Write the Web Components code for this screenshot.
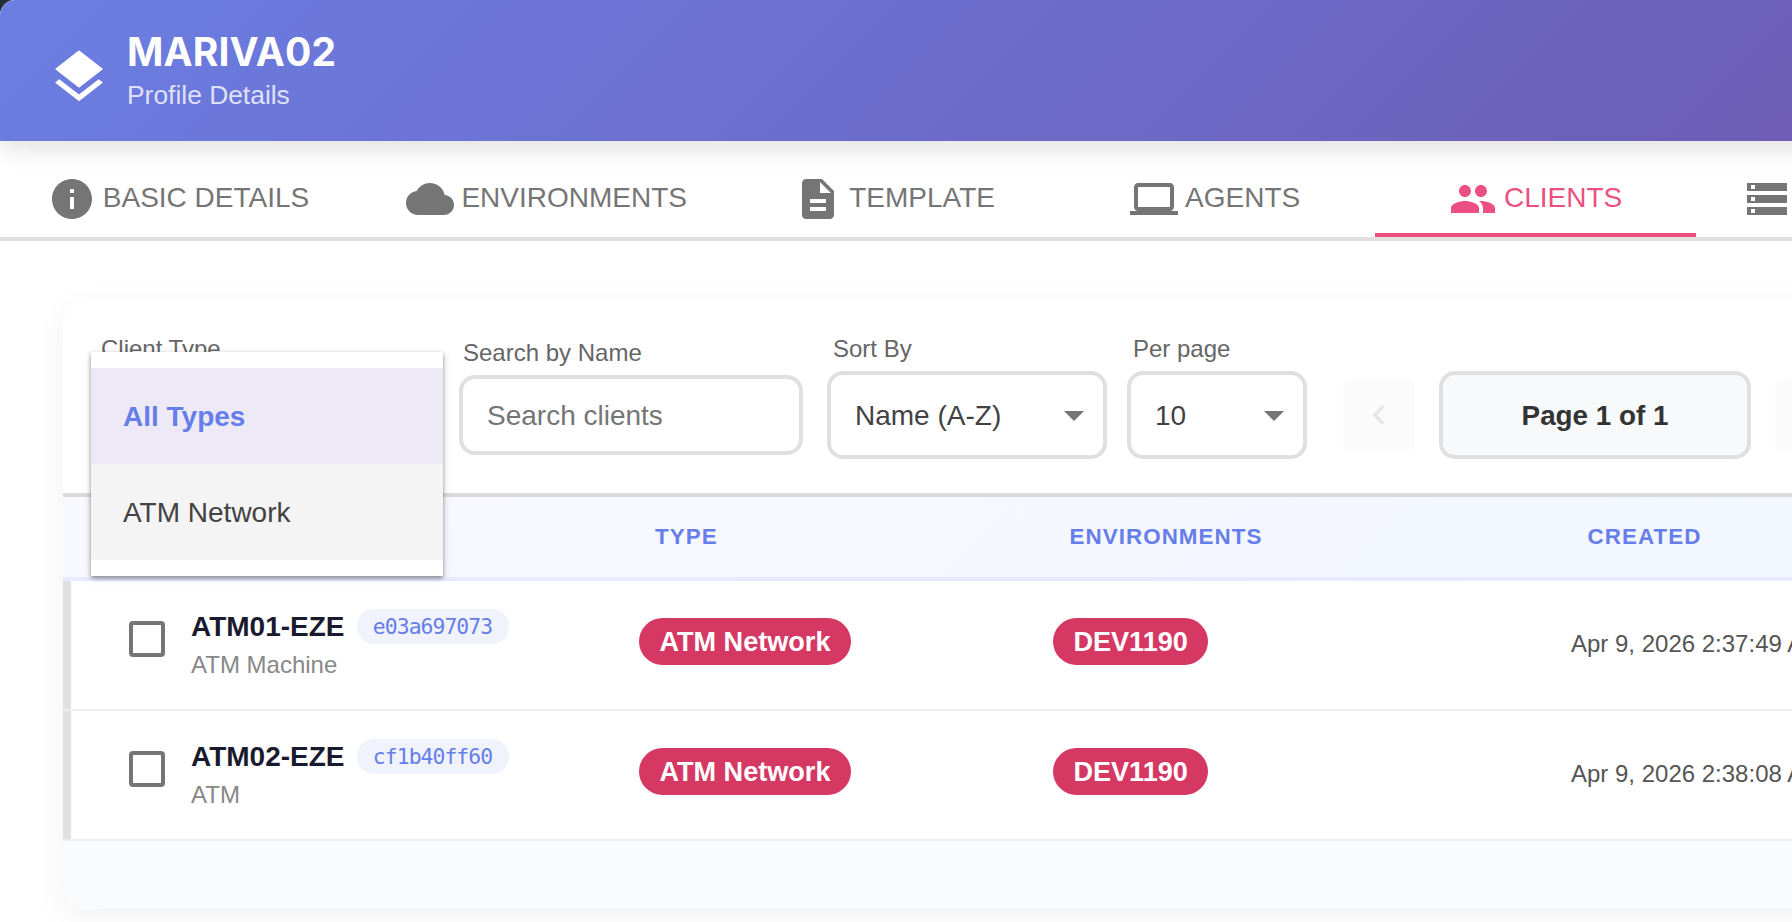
<!DOCTYPE html>
<html lang="en">
<head>
<meta charset="utf-8">
<title>MARIVA02 - Profile Details</title>
<style>
  html, body {
    margin: 0;
    height: 100%;
    overflow: hidden;
    background: #252d37;
    font-family: "Liberation Sans", Arial, sans-serif;
  }
</style>
</head>
<body>
<profile-page></profile-page>

<script>
const ICONS = {
  layers: "M11.99 18.54l-7.37-5.73L3 14.07l9 7 9-7-1.63-1.27-7.38 5.74zM12 16l7.36-5.73L21 9l-9-7-9 7 1.63 1.27L12 16z",
  info: "M12 2C6.48 2 2 6.48 2 12s4.48 10 10 10 10-4.48 10-10S17.52 2 12 2zm1 15h-2v-6h2v6zm0-8h-2V7h2v2z",
  cloud: "M19.35 10.04C18.67 6.59 15.64 4 12 4 9.11 4 6.6 5.64 5.35 8.04 2.34 8.36 0 10.91 0 14c0 3.31 2.69 6 6 6h13c2.76 0 5-2.24 5-5 0-2.64-2.05-4.78-4.65-4.96z",
  description: "M14 2H6c-1.1 0-1.99.9-1.99 2L4 20c0 1.1.89 2 1.99 2H18c1.1 0 2-.9 2-2V8l-6-6zm2 16H8v-2h8v2zm0-4H8v-2h8v2zm-3-5V3.5L18.5 9H13z",
  computer: "M20 18c1.1 0 1.99-.9 1.99-2L22 6c0-1.1-.9-2-2-2H4c-1.1 0-2 .9-2 2v10c0 1.1.9 2 2 2H0v2h24v-2h-4zM4 6h16v10H4V6z",
  people: "M16 11c1.66 0 2.99-1.34 2.99-3S17.66 5 16 5c-1.66 0-3 1.34-3 3s1.34 3 3 3zm-8 0c1.66 0 2.99-1.34 2.99-3S9.66 5 8 5C6.34 5 5 6.34 5 8s1.34 3 3 3zm0 2c-2.33 0-7 1.17-7 3.5V19h14v-2.5c0-2.33-4.67-3.5-7-3.5zm8 0c-.29 0-.62.02-.97.05 1.16.84 1.97 1.97 1.97 3.45V19h6v-2.5c0-2.33-4.67-3.5-7-3.5z",
  storage: "M2 20h20v-4H2v4zm2-3h2v2H4v-2zM2 4v4h20V4H2zm4 3H4V5h2v2zm-4 7h20v-4H2v4zm2-3h2v2H4v-2z",
  arrow: "M7 10l5 5 5-5z",
  left: "M15.41 7.41L14 6l-6 6 6 6 1.41-1.41L10.83 12z",
  right: "M8.59 16.59L10 18l6-6-6-6-1.41 1.41L13.17 12z"
};

// Base class: every element renders its css and html in an open shadow root
class BaseElement extends HTMLElement {
  constructor(){
    super();
    this.attachShadow({mode: "open"});
  }

  connectedCallback(){
    this.shadowRoot.innerHTML = `
    <style>
      * { box-sizing: border-box; }
      ${this.constructor.styles}
    </style>
    ${this.template()}`;
  }
}

class UiIcon extends BaseElement {
  static get styles(){
    return /* css */`
      :host {
        display: block;
        flex: none;
        width: var(--icon-size, 48px);
        height: var(--icon-size, 48px);
      }

      svg {
        display: block;
        width: 100%;
        height: 100%;
        fill: currentColor;
      }
    `
  }

  template(){
    return /* html */`<svg viewBox="0 0 24 24"><path d="${ICONS[this.getAttribute("name")]}"/></svg>`
  }
}

class ProfileHeader extends BaseElement {
  static get styles(){
    return /* css */`
      :host {
        display: flex;
        position: relative;
        z-index: 1;
        width: 2600px;
        height: 141px;
        padding: 32px 47px 0;
        gap: 16px;
        background: linear-gradient(135deg, #6b7ee2 0%, #6e4fa4 100%);
        border-radius: 15px 0 0 0;
        box-shadow: 0 8px 24px rgba(0, 0, 0, .12);
        color: #fff;
      }

      ui-icon {
        --icon-size: 64px;
        margin-top: 13px;
      }

      h1 {
        margin: 0;
        font: 650 39px/40px Inter, sans-serif;
        letter-spacing: .15px;
      }

      p {
        margin: 8px 0 0;
        font-size: 26.4px;
        line-height: 30px;
        color: rgba(255, 255, 255, .8);
      }
    `
  }

  template(){
    return /* html */`
    <ui-icon name="layers"></ui-icon>
    <div>
      <h1><slot></slot></h1>
      <p><slot name="subtitle"></slot></p>
    </div>`
  }
}

class NavTab extends BaseElement {
  static get styles(){
    return /* css */`
      :host {
        display: flex;
        flex: none;
        justify-content: center;
        align-items: center;
        gap: 7px;
        min-width: 320.5px;
        height: 96px;
        padding: 24px 47.4px 0;
        border-bottom: 4px solid transparent;
        font-size: 28px;
        color: #757575;
        white-space: nowrap;
      }

      :host([active]) {
        color: #ec5082;
        border-color: #ec5082;
      }

      :host(:empty) {
        justify-content: flex-start;
      }

      span {
        margin-top: -3px;
      }
    `
  }

  template(){
    return /* html */`<ui-icon name="${this.getAttribute("icon")}"></ui-icon><span><slot></slot></span>`
  }
}

class NavTabs extends BaseElement {
  static get styles(){
    return /* css */`
      :host {
        display: flex;
        height: 100px;
        border-bottom: 4px solid #e0e0e0;
        background: #fff;
      }

      ::slotted(:first-child) {
        box-sizing: border-box;
        width: 359px;
        padding-left: 46px !important;
        padding-right: 48px !important;
      }
    `
  }

  template(){
    return /* html */`<slot></slot>`
  }
}

// Labelled box: plain input, or a select when it has the "select" attribute
class FormField extends BaseElement {
  static get styles(){
    return /* css */`
      :host {
        display: flex;
        flex: none;
        flex-direction: column;
        gap: 8px;
      }

      label {
        padding-left: var(--label-indent, 6px);
        font-size: 24px;
        line-height: 28px;
        color: #666;
      }

      .box {
        display: flex;
        align-items: center;
        justify-content: space-between;
        height: 80px;
        padding: 0 5px 0 24px;
        border: 4px solid #e0e0e0;
        border-radius: 16px;
        font-size: 28px;
        color: #757575;
      }

      span {
        padding-top: 2px;
      }

      :host([select]) .box {
        height: 88px;
        color: #424242;
      }

      ui-icon {
        color: #757575;
      }
    `
  }

  template(){
    return /* html */`
    <label>${this.getAttribute("label")}</label>
    <div class="box">
      <span><slot></slot></span>
      ${this.hasAttribute("select") ? `<ui-icon name="arrow"></ui-icon>` : ""}
    </div>`
  }
}

class SelectMenu extends BaseElement {
  static get styles(){
    return /* css */`
      :host {
        display: block;
        position: absolute;
        top: 51px;
        left: 28px;
        z-index: 2;
        width: 352px;
        padding: 16px 0;
        background: #fff;
        box-shadow:
          0 2px 4px rgba(0, 0, 0, .42),
          0 2px 10px rgba(0, 0, 0, .1);
        font-size: 28px;
      }

      ::slotted(div) {
        box-sizing: border-box;
        height: 96px;
        padding: 1px 0 0 32px;
        line-height: 96px;
        color: #424242;
        background: #f4f4f4;
      }

      ::slotted(.selected) {
        color: #667eea;
        background: #ede9f6;
        font-weight: bold;
      }
    `
  }

  template(){
    return /* html */`<slot></slot>`
  }
}

class PageControls extends BaseElement {
  static get styles(){
    return /* css */`
      :host {
        display: flex;
        flex: none;
        align-items: center;
        gap: 24px;
        height: 88px;
      }

      button {
        display: grid;
        place-items: center;
        width: 72px;
        height: 72px;
        padding: 0;
        border: 0;
        border-radius: 8px;
        background: #fbfbfb;
        color: #e5e5e5;
        --icon-size: 40px;
      }

      .current {
        width: 312px;
        height: 88px;
        border: 4px solid #e0e0e0;
        border-radius: 16px;
        background: #f8f9fb;
        font-size: 27.8px;
        font-weight: bold;
        line-height: 82px;
        text-align: center;
        color: #333;
      }
    `
  }

  template(){
    return /* html */`
    <button><ui-icon name="left"></ui-icon></button>
    <div class="current"><slot></slot></div>
    <button><ui-icon name="right"></ui-icon></button>`
  }
}

class ClientRow extends BaseElement {
  static get styles(){
    return /* css */`
      :host {
        display: grid;
        grid-template-columns: 568px 414px 518px 1fr;
        height: 130px;
        border-bottom: 2px solid #eee;
        background: linear-gradient(#e0e0e0, #e0e0e0) 0 0 / 8px 100% no-repeat #fff;
        padding-left: 8px;
      }

      .client {
        display: flex;
        padding: 24px 0 0 58px;
        gap: 26px;
      }

      .checkbox {
        width: 36px;
        height: 36px;
        margin-top: 16px;
        border: 4px solid #757575;
        border-radius: 4px;
      }

      .name {
        display: flex;
        align-items: center;
        gap: 12px;
        height: 44px;
        font-size: 28px;
        font-weight: bold;
        color: #1a1a2e;
      }

      code {
        width: 152px;
        height: 35px;
        margin-top: -1px;
        border-radius: 17px;
        background: #f0f2fc;
        font: 21.4px/35px "DejaVu Sans Mono", monospace;
        letter-spacing: -.95px;
        text-align: center;
        color: #667eea;
      }

      .kind {
        padding-top: 1px;
        font-size: 24px;
        line-height: 30px;
        color: #888;
      }

      .badge {
        display: inline-block;
        height: 47px;
        margin-top: 37px;
        padding: 0 20.4px;
        border-radius: 24px;
        background: #d63864;
        font-size: 27.1px;
        font-weight: bold;
        line-height: 48px;
        color: #fff;
      }

      .date {
        padding-top: 49px;
        font-size: 24px;
        line-height: 28px;
        color: #555;
      }
    `
  }

  template(){
    return /* html */`
    <div class="client">
      <div class="checkbox"></div>
      <div>
        <div class="name"><slot></slot><code>${this.getAttribute("hash")}</code></div>
        <div class="kind">${this.getAttribute("kind")}</div>
      </div>
    </div>
    <div><span class="badge">${this.getAttribute("type")}</span></div>
    <div><span class="badge">${this.getAttribute("env")}</span></div>
    <div class="date">${this.getAttribute("created")}</div>`
  }
}

class ClientsCard extends BaseElement {
  static get styles(){
    return /* css */`
      :host {
        display: block;
        position: relative;
        width: 2400px;
        border-radius: 24px;
        background: #fff;
        box-shadow: 0 8px 32px rgba(0, 0, 0, .06);
      }

      .toolbar {
        display: flex;
        height: 196px;
        padding: 34px 28px 0;
        border-bottom: 4px solid #dbdbdb;
      }

      .type { width: 352px; --label-indent: 10px; }
      .search { width: 344px; margin: 4px 0 0 16px; --label-indent: 4px; }
      .sort { width: 280px; margin-left: 24px; }
      .per-page { width: 180px; margin-left: 20px; }
      page-controls { margin: 36px 0 0 36px; }

      .head {
        display: grid;
        grid-template-columns: 576px 414.5px 518px 1fr;
        height: 84px;
        border-bottom: 4px solid #e8eaff;
        background: linear-gradient(135deg, #f8f9ff 0%, #f0f5ff 100%);
        font-size: 22.4px;
        font-weight: bold;
        line-height: 79px;
        letter-spacing: 1.05px;
        color: #667eea;
      }

      .head span {
        padding-left: 16px;
      }

      .foot {
        height: 68px;
        border-radius: 0 0 24px 24px;
        background: #fafbfd;
      }
    `
  }

  template(){
    return /* html */`
    <div class="toolbar">
      <form-field class="type" label="Client Type" select></form-field>
      <form-field class="search" label="Search by Name">Search clients</form-field>
      <form-field class="sort" label="Sort By" select>Name (A-Z)</form-field>
      <form-field class="per-page" label="Per page" select>10</form-field>
      <page-controls>Page 1 of 1</page-controls>
    </div>
    <select-menu>
      <div class="selected">All Types</div>
      <div>ATM Network</div>
    </select-menu>
    <div class="head">
      <span></span><span>TYPE</span><span>ENVIRONMENTS</span><span>CREATED</span>
    </div>
    <slot></slot>
    <div class="foot"></div>`
  }
}

class ProfilePage extends BaseElement {
  static get styles(){
    return /* css */`
      :host {
        display: block;
        height: 100%;
        border-radius: 15px 0 0 0;
        background: #fff;
        overflow: hidden;
      }

      clients-card {
        margin: 60px 0 0 63px;
      }
    `
  }

  template(){
    return /* html */`
    <profile-header>MARIVA02<span slot="subtitle">Profile Details</span></profile-header>
    <nav-tabs>
      <nav-tab icon="info">BASIC DETAILS</nav-tab>
      <nav-tab icon="cloud">ENVIRONMENTS</nav-tab>
      <nav-tab icon="description">TEMPLATE</nav-tab>
      <nav-tab icon="computer">AGENTS</nav-tab>
      <nav-tab icon="people" active>CLIENTS</nav-tab>
      <nav-tab icon="storage"></nav-tab>
    </nav-tabs>
    <clients-card>
      <client-row hash="e03a697073" kind="ATM Machine" type="ATM Network" env="DEV1190" created="Apr 9, 2026 2:37:49 AM">ATM01-EZE</client-row>
      <client-row hash="cf1b40ff60" kind="ATM" type="ATM Network" env="DEV1190" created="Apr 9, 2026 2:38:08 AM">ATM02-EZE</client-row>
    </clients-card>`
  }
}

customElements.define('ui-icon', UiIcon);
customElements.define('profile-header', ProfileHeader);
customElements.define('nav-tab', NavTab);
customElements.define('nav-tabs', NavTabs);
customElements.define('form-field', FormField);
customElements.define('select-menu', SelectMenu);
customElements.define('page-controls', PageControls);
customElements.define('client-row', ClientRow);
customElements.define('clients-card', ClientsCard);
customElements.define('profile-page', ProfilePage);
</script>
</body>
</html>
